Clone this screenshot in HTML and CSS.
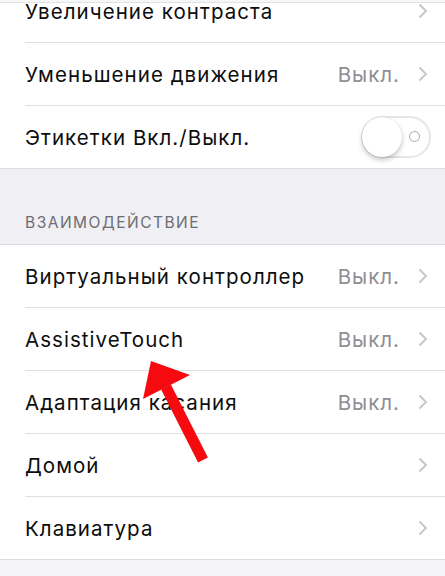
FILE: index.html
```html
<!DOCTYPE html>
<html lang="ru">
<head>
<meta charset="utf-8">
<title>Универсальный доступ</title>
<link rel="stylesheet" href="styles.css">
</head>
<body>
<div class="screen">
  <div class="topbar"></div>
  <section class="group group-first">
    <div class="row"><span class="label">Увеличение контраста</span><span class="right"><svg class="chev" viewBox="0 0 10 16"><path d="M1.5 1.5 L8 8 L1.5 14.5"/></svg></span></div>
    <div class="row"><span class="label">Уменьшение движения</span><span class="right"><span class="value">Выкл.</span><svg class="chev" viewBox="0 0 10 16"><path d="M1.5 1.5 L8 8 L1.5 14.5"/></svg></span></div>
    <div class="row last"><span class="label">Этикетки Вкл./Выкл.</span><span class="right"><span class="switch"><span class="knob"></span><span class="off-mark"></span></span></span></div>
  </section>
  <div class="section-header">ВЗАИМОДЕЙСТВИЕ</div>
  <section class="group">
    <div class="row"><span class="label">Виртуальный контроллер</span><span class="right"><span class="value">Выкл.</span><svg class="chev" viewBox="0 0 10 16"><path d="M1.5 1.5 L8 8 L1.5 14.5"/></svg></span></div>
    <div class="row"><span class="label">AssistiveTouch</span><span class="right"><span class="value">Выкл.</span><svg class="chev" viewBox="0 0 10 16"><path d="M1.5 1.5 L8 8 L1.5 14.5"/></svg></span></div>
    <div class="row"><span class="label">Адаптация касания</span><span class="right"><span class="value">Выкл.</span><svg class="chev" viewBox="0 0 10 16"><path d="M1.5 1.5 L8 8 L1.5 14.5"/></svg></span></div>
    <div class="row"><span class="label">Домой</span><span class="right"><svg class="chev" viewBox="0 0 10 16"><path d="M1.5 1.5 L8 8 L1.5 14.5"/></svg></span></div>
    <div class="row"><span class="label">Клавиатура</span><span class="right"><svg class="chev" viewBox="0 0 10 16"><path d="M1.5 1.5 L8 8 L1.5 14.5"/></svg></span></div>
  </section>
  <div class="footer-fill"></div>
  <svg class="arrow" viewBox="0 0 445 576" width="445" height="576">
    <line x1="203" y1="460" x2="166" y2="387" stroke="#f40a0f" stroke-width="11"/>
    <polygon points="151,361 190,375 143,399" fill="#f40a0f"/>
  </svg>
</div>
</body>
</html>
```

FILE: styles.css
```css
html, body {
  margin: 0;
  padding: 0;
}
body {
  background: #f6f6f8;
  font-family: "Inter", "Liberation Sans", sans-serif;
  -webkit-font-smoothing: antialiased;
}
.screen {
  position: relative;
  width: 445px;
  height: 576px;
  overflow: hidden;
  background: #efeff4;
  display: flex;
  flex-direction: column;
}
.topbar {
  position: absolute;
  top: 0;
  left: 0;
  right: 0;
  height: 2px;
  background: #f7f7f8;
  border-bottom: 1px solid #e2e2e6;
  z-index: 2;
}
.group {
  background: #fff;
  border-top: 1px solid #dcdce0;
  border-bottom: 1px solid #dcdce0;
  flex: none;
}
.group-first {
  margin-top: -20px;
  border-top: none;
}
.row {
  margin-left: 25px;
  height: 62px;
  padding-right: 17px;
  display: flex;
  align-items: center;
  justify-content: space-between;
  border-bottom: 1px solid #dfdfe3;
}
.row.last,
.row:last-child {
  border-bottom: none;
}
.label {
  font-size: 20.5px;
  color: #0d0d0d;
  letter-spacing: 1.05px;
}
.right {
  display: flex;
  align-items: center;
}
.value {
  font-size: 20.5px;
  color: #8e8e93;
  letter-spacing: 1px;
  margin-right: 18px;
}
.chev {
  width: 10px;
  height: 16px;
  fill: none;
  stroke: #c7c7cc;
  stroke-width: 2;
}
.section-header {
  flex: none;
  height: 63px;
  padding: 0 0 12px 25px;
  display: flex;
  align-items: flex-end;
  font-size: 15.5px;
  color: #6d6d72;
  letter-spacing: 1.5px;
}
.footer-fill {
  flex: 1;
  background: #f5f5f7;
}
.switch {
  position: relative;
  width: 66px;
  height: 38px;
  border: 2px solid #e6e6ea;
  border-radius: 21px;
  background: #fff;
  margin-right: -3px;
}
.knob {
  position: absolute;
  left: -1px;
  top: -1px;
  width: 40px;
  height: 40px;
  border-radius: 50%;
  background: #fff;
  box-shadow: 0 3px 5px rgba(0,0,0,0.22), 0 0 0 0.5px rgba(0,0,0,0.08);
}
.off-mark {
  position: absolute;
  right: 9px;
  top: 13px;
  width: 9px;
  height: 9px;
  border: 1.5px solid #a8a8ad;
  border-radius: 50%;
}
.arrow {
  position: absolute;
  top: 0;
  left: 0;
  pointer-events: none;
  z-index: 3;
}
```
